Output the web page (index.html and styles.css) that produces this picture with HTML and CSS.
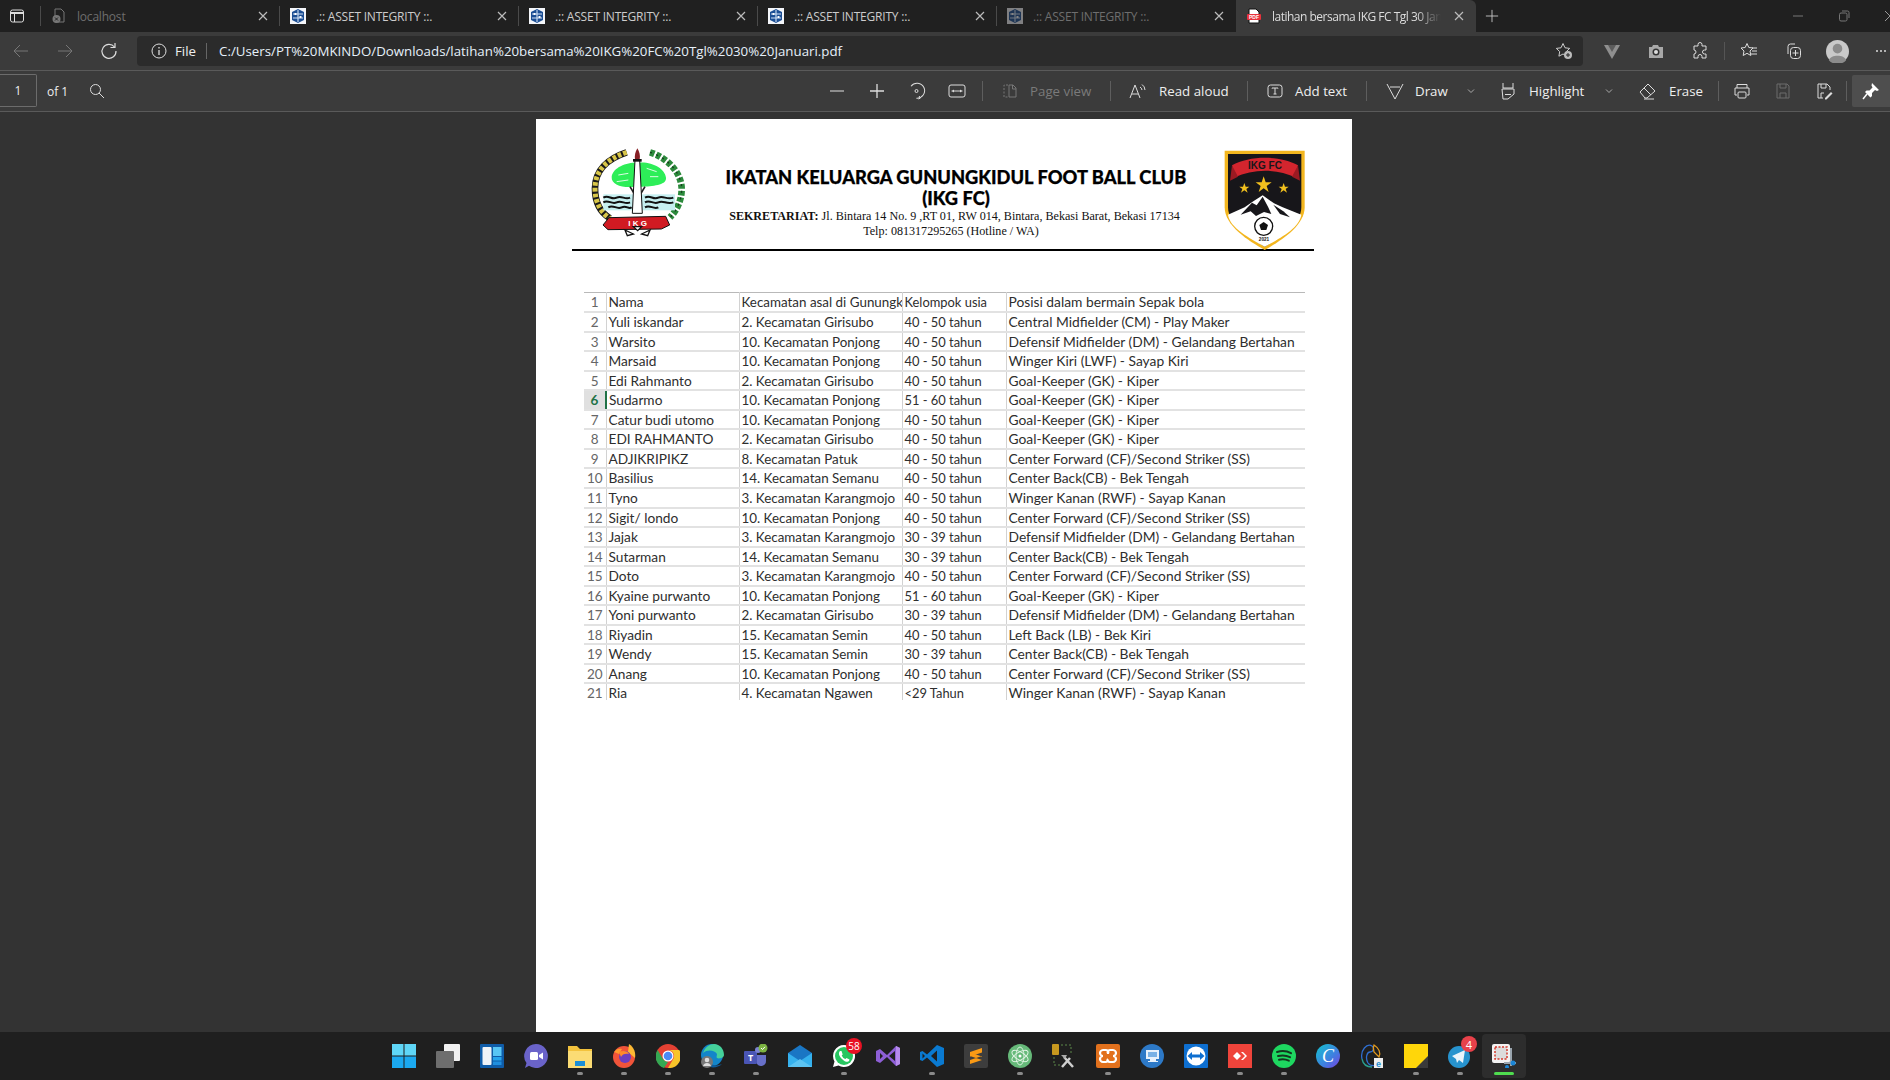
FILE: index.html
```html
<!DOCTYPE html>
<html lang="en">
<head>
<meta charset="utf-8">
<title>latihan bersama IKG FC Tgl 30 Januari</title>
<link rel="stylesheet" href="styles.css">
</head>
<body>
<svg class="defs" aria-hidden="true">
  <symbol id="x" viewBox="0 0 16 16"><path d="M4 4l8 8M12 4l-8 8" fill="none" stroke="currentColor" stroke-width="1.2"/></symbol>
  <symbol id="asset" viewBox="0 0 16 16"><rect width="16" height="16" fill="#f4f6fa"/><path d="M8 1l6 3v8l-6 3-6-3V4z" fill="#1d4f94"/><path d="M8 2v12M3 6h10M3 10h10" stroke="#cfe0f5" stroke-width="1.1"/><path d="M4.500 5h2v2h-2zM9.500 8h2v2h-2z" fill="#fff"/></symbol>
</svg>
<div class="app">
  <div class="tabbar">
    <div class="side-btn"><svg class="ic16" viewBox="0 0 16 16"><rect x="1.500" y="2" width="13" height="12" rx="2" fill="none" stroke="#ddd"/><path d="M1.500 5h13" stroke="#ddd" stroke-width="2"/><path d="M5.500 5v9" stroke="#ddd"/></svg></div>
    <div class="tab tab-dim">
      <svg class="ic16" viewBox="0 0 16 16"><path d="M4 1h6l3 3v10H4z" fill="none" stroke="#777"/><circle cx="5.500" cy="11" r="4" fill="#777"/><path d="M4 9.500l3 3M7 9.500l-3 3" stroke="#222"/></svg>
      <span class="tab-title">localhost</span><svg class="tab-x"><use href="#x"/></svg>
    </div>
    <div class="tab"><svg class="ic16"><use href="#asset"/></svg><span class="tab-title">.:: ASSET INTEGRITY ::.</span><svg class="tab-x"><use href="#x"/></svg></div>
    <div class="tab"><svg class="ic16"><use href="#asset"/></svg><span class="tab-title">.:: ASSET INTEGRITY ::.</span><svg class="tab-x"><use href="#x"/></svg></div>
    <div class="tab"><svg class="ic16"><use href="#asset"/></svg><span class="tab-title">.:: ASSET INTEGRITY ::.</span><svg class="tab-x"><use href="#x"/></svg></div>
    <div class="tab tab-dim tab-last"><svg class="ic16 faded"><use href="#asset"/></svg><span class="tab-title">.:: ASSET INTEGRITY ::.</span><svg class="tab-x"><use href="#x"/></svg></div>
    <div class="tab tab-active">
      <svg class="ic16" viewBox="0 0 16 16"><path d="M3 1h7l3 3v11H3z" fill="#fff" stroke="#111"/><rect x="1" y="6" width="14" height="6" rx="1" fill="#e8323c"/><text x="8" y="11" class="pdf-mark">PDF</text></svg>
      <span class="tab-title fade">latihan bersama IKG FC Tgl 30 Januari</span><svg class="tab-x"><use href="#x"/></svg>
    </div>
    <svg class="new-tab" viewBox="0 0 16 16"><path d="M8 1v14M1 8h14" stroke="#ccc" fill="none"/></svg>
    <div class="win-ctrl">
      <svg class="ic12" viewBox="0 0 12 12"><path d="M1 6h10" stroke="#777"/></svg>
      <svg class="ic12" viewBox="0 0 12 12"><rect x="1.500" y="3" width="7.500" height="8" rx="1.500" fill="none" stroke="#777"/><path d="M4 1h5.500a1.500 1.500 0 0 1 1.500 1.500V8" fill="none" stroke="#777"/></svg>
      <svg class="ic12" viewBox="0 0 12 12"><path d="M1 1l10 10M11 1L1 11" stroke="#999"/></svg>
    </div>
  </div>

  <div class="addr-row">
    <div class="nav-btn"><svg class="ic18" viewBox="0 0 18 18"><path d="M16 9H2M8 3L2 9l6 6" fill="none" stroke="#777"/></svg></div>
    <div class="nav-btn"><svg class="ic18" viewBox="0 0 18 18"><path d="M2 9h14M10 3l6 6-6 6" fill="none" stroke="#777"/></svg></div>
    <div class="nav-btn"><svg class="ic18" viewBox="0 0 18 18"><path d="M14.500 5A7 7 0 1 0 16 9" fill="none" stroke="#ddd" stroke-width="1.200"/><path d="M15 1v4.500h-4.500" fill="none" stroke="#ddd" stroke-width="1.200"/></svg></div>
    <div class="addr-box">
      <svg class="ic16" viewBox="0 0 16 16"><circle cx="8" cy="8" r="7" fill="none" stroke="#ddd"/><path d="M8 7v5M8 4v1.500" stroke="#ddd" stroke-width="1.300"/></svg>
      <span class="addr-file">File</span>
      <span class="addr-sep"></span>
      <span class="addr-url">C:/Users/PT%20MKINDO/Downloads/latihan%20bersama%20IKG%20FC%20Tgl%2030%20Januari.pdf</span>
      <svg class="ic18" viewBox="0 0 18 18"><path d="M8 1.500l2 4.300 4.700.6-3.400 3.200.8 4.600L8 12" fill="none" stroke="#ccc"/><path d="M8 1.500L6 5.800l-4.700.6 3.400 3.200-.8 4.600L8 12" fill="none" stroke="#ccc"/><circle cx="13" cy="13" r="4" fill="#bbb"/><path d="M13 11v4M11 13h4" stroke="#222"/></svg>
    </div>
    <div class="ext-group">
      <div class="ext-btn"><svg class="ic18" viewBox="0 0 18 18"><path d="M1 3h16L9 17z" fill="#8f8f8f"/><path d="M5 3h8L9 10z" fill="#5c5c5c"/></svg></div>
      <div class="ext-btn"><svg class="ic18" viewBox="0 0 18 18"><path d="M2 5h3l1-2h5l1 2h4v11H2z" fill="#a8a8a8"/><circle cx="9" cy="10" r="3.500" fill="#333"/><circle cx="9" cy="10" r="2" fill="#ddd"/></svg></div>
      <div class="ext-btn"><svg class="ic18" viewBox="0 0 18 18"><path d="M7 2.500a2 2 0 0 1 4 0V4h4v4h-1.500a2 2 0 0 0 0 4H15v4h-4v-1.500a2 2 0 0 0-4 0V16H3v-4a2 2 0 0 0 0-4V4h4z" fill="none" stroke="#ddd"/></svg></div>
      <span class="ext-sep"></span>
      <div class="ext-btn"><svg class="ic18" viewBox="0 0 18 18"><path d="M7 1.500l1.800 4 4.200.5-3 3 .8 4.500L7 11.300 3.200 13.500l.8-4.500-3-3 4.200-.5z" fill="none" stroke="#ddd"/><path d="M12 8h5M12 11h5M11 14h6" stroke="#ddd" transform="translate(0 -2)"/></svg></div>
      <div class="ext-btn"><svg class="ic18" viewBox="0 0 18 18"><path d="M4 12V4.500A2.500 2.500 0 0 1 6.500 2H11" fill="none" stroke="#ddd"/><rect x="6.500" y="5.500" width="10" height="11" rx="3" fill="none" stroke="#ddd"/><path d="M11.500 8v6M8.500 11h6" stroke="#ddd"/></svg></div>
      <div class="ext-btn"><svg class="avatar" viewBox="0 0 24 24"><circle cx="12" cy="12" r="12" fill="#c9c9c9"/><circle cx="12" cy="9" r="5" fill="#8b8b8b"/><path d="M3 21c2-6 16-6 18 0a12 12 0 0 1-18 0z" fill="#8b8b8b"/></svg></div>
      <div class="ext-btn dots"><span></span><span></span><span></span></div>
    </div>
  </div>

  <div class="toolbar">
    <div class="pager">
      <div class="page-box">1</div>
      <span class="page-of">of 1</span>
      <svg class="ic16 search" viewBox="0 0 16 16"><circle cx="6.500" cy="6.500" r="5" fill="none" stroke="#ddd"/><path d="M10 10l5 5" stroke="#ddd"/></svg>
    </div>
    <div class="tools">
      <div class="tb"><svg class="ic16" viewBox="0 0 16 16"><path d="M1 8h14" stroke="#bbb" stroke-width="1.300"/></svg></div>
      <div class="tb"><svg class="ic16" viewBox="0 0 16 16"><path d="M1 8h14M8 1v14" stroke="#ddd" stroke-width="1.300"/></svg></div>
      <div class="tb"><svg class="ic18" viewBox="0 0 18 18"><path d="M5 2.500a7.500 7.500 0 1 1 1 13" fill="none" stroke="#ddd" transform="rotate(-20 9 9)"/><circle cx="8.500" cy="9" r="1.500" fill="none" stroke="#ddd"/><path d="M10.500 17l2-1-1.500-2" fill="none" stroke="#ddd"/></svg></div>
      <div class="tb"><svg class="ic18" viewBox="0 0 18 18"><rect x="1" y="3" width="16" height="12" rx="2" fill="none" stroke="#ddd"/><path d="M3.500 9h11" stroke="#ddd"/><path d="M6 7.500L4 9l2 1.500zM12 7.500L14 9l-2 1.500z" fill="#ddd"/></svg></div>
      <span class="tsep sep-a"></span>
      <div class="tl tl-page dim"><svg class="ic16" viewBox="0 0 16 16"><path d="M6 2H2v12h4" fill="none" stroke="#777" stroke-dasharray="2 1.500"/><path d="M7 2h4l3 3v9H7zM10.500 2v4H14" fill="none" stroke="#777"/></svg><span>Page view</span></div>
      <span class="tsep"></span>
      <div class="tl tl-read"><svg class="ic18" viewBox="0 0 18 18"><path d="M1 16L6 3l5 13M3 12h6" fill="none" stroke="#ddd"/><path d="M11 5a4 4 0 0 1 2 3M13 2.500a7 7 0 0 1 3 5.500" fill="none" stroke="#ddd"/></svg><span>Read aloud</span></div>
      <span class="tsep"></span>
      <div class="tl tl-add"><svg class="ic16" viewBox="0 0 16 16"><rect x="1" y="2" width="14" height="12" rx="2.500" fill="none" stroke="#ddd"/><path d="M5 5.500V5h6v.5M8 5v6M6.500 11h3" fill="none" stroke="#ddd"/></svg><span>Add text</span></div>
      <span class="tsep"></span>
      <div class="tl tl-draw"><svg class="ic18" viewBox="0 0 18 18"><path d="M1 2l8 15 8-15M4 5h10" fill="none" stroke="#ddd"/></svg><span>Draw</span><svg class="chev" viewBox="0 0 8 8"><path d="M1 2.500L4 5.500l3-3" fill="none" stroke="#aaa"/></svg></div>
      <div class="tl tl-high"><svg class="ic18" viewBox="0 0 18 18"><path d="M4 1v5h10V1M3 7h12v5l-6 5H4z" fill="none" stroke="#ddd"/><path d="M6 12.500h6" stroke="#ddd"/></svg><span>Highlight</span><svg class="chev" viewBox="0 0 8 8"><path d="M1 2.500L4 5.500l3-3" fill="none" stroke="#aaa"/></svg></div>
      <div class="tl tl-erase"><svg class="ic18" viewBox="0 0 18 18"><path d="M1 10l8-8 7 7-8 7H6z" fill="none" stroke="#ddd"/><path d="M5 6l7 7" stroke="#ddd"/><path d="M5 17h10" stroke="#ddd"/></svg><span>Erase</span></div>
      <span class="tsep"></span>
      <div class="tb tb-print"><svg class="ic18" viewBox="0 0 18 18"><path d="M4 6V2.500h10V6M4 13H2V6h14v7h-2" fill="none" stroke="#ddd"/><rect x="5" y="10" width="8" height="6" rx="1" fill="none" stroke="#ddd"/></svg></div>
      <div class="tb tb-save"><svg class="ic18" viewBox="0 0 18 18"><path d="M3 2h10l2 2v12H3zM6 2v4h6V2M6 16v-5h6v5" fill="none" stroke="#6c6c6c"/></svg></div>
      <div class="tb tb-save"><svg class="ic18" viewBox="0 0 18 18"><path d="M8 16H3V2h9l3 3v3M6 2v4h5V2M6 16v-5h3" fill="none" stroke="#ddd"/><path d="M10 16l6-6 1.500 1.500-6 6H10z" fill="#ddd"/></svg></div>
      <span class="tsep sep-b"></span>
      <div class="pin"><svg class="ic18" viewBox="0 0 18 18"><path d="M10 1l7 7-2 1-2-1-3 3v3l-1.500 1.500L3 10l1.500-1.500h3l3-3-1-2z" fill="#fff"/><path d="M5 12l-4 5" stroke="#fff" stroke-width="1.500"/></svg></div>
    </div>
  </div>

  <main class="viewer">
    <section class="page">
      <header class="letterhead">
        <svg class="logo-left" viewBox="0 0 315 285">
          <path d="M125 22C70 40 30 75 30 130c0 45 20 75 45 90" fill="none" stroke="#1a1a1a" stroke-width="20"/>
          <path d="M125 22C70 40 30 75 30 130c0 45 20 75 45 90" fill="none" stroke="#d8c649" stroke-width="15" stroke-dasharray="11 6"/>
          <path d="M195 22c50 15 95 60 95 110 0 35-15 65-35 85" fill="none" stroke="#2c8a3c" stroke-width="20" stroke-dasharray="14 6"/>
          <path d="M195 22c50 15 95 60 95 110 0 35-15 65-35 85" fill="none" stroke="#173d1d" stroke-width="4" stroke-dasharray="6 14"/>
          <path d="M80 95c5-30 50-45 85-42 40-2 75 20 78 45 2 20-30 25-70 27l-20 0c-40 5-75-5-73-30z" fill="#2dee58"/>
          <path d="M100 90l30-5M185 70l30 10M195 95l25 0M95 110l35-5" stroke="#fff" stroke-width="2.500"/>
          <path d="M135 125l15 25M180 125l-15 25" stroke="#222" stroke-width="5"/>
          <rect x="55" y="148" width="215" height="48" fill="#c5eff0"/>
          <path d="M55 158c15-10 25 8 40 0s25 8 40 0M180 158c15-10 25 8 40 0s25 8 45 0M55 172c15-10 25 8 40 0s25 8 40 0M180 172c15-10 25 8 40 0s25 8 45 0M70 187c15-10 25 8 40 0s20 8 30 0M180 187c15-10 25 8 40 0" fill="none" stroke="#111" stroke-width="6"/>
          <path d="M150 45h14l8 160h-30z" fill="#fff" stroke="#111" stroke-width="3"/>
          <path d="M157 10c7 12 9 20 7 34h-14c-2-14 1-22 7-34z" fill="#861f24"/>
          <rect x="144" y="42" width="26" height="8" fill="#111"/>
          <path d="M72 218l170-4 12 26-25 12-160 2-15-14z" fill="#d01a22" stroke="#111" stroke-width="3"/>
          <text x="158" y="242" class="logo-ikg">I K G</text>
          <path d="M120 255l25 12-18 5zM195 255l-25 12 18 5zM145 245h25l-12 12z" fill="#fff" stroke="#111" stroke-width="4"/>
        </svg>
        <div class="letter-text">
          <h1>IKATAN KELUARGA GUNUNGKIDUL FOOT BALL CLUB<br>(IKG FC)</h1>
          <p class="addr-line"><b>SEKRETARIAT:</b> Jl. Bintara 14 No. 9 ,RT 01, RW 014, Bintara, Bekasi Barat, Bekasi 17134</p>
          <p class="addr-line telp-line">Telp: 081317295265 (Hotline / WA)</p>
        </div>
        <svg class="logo-right" viewBox="0 0 270 312">
          <path d="M14 8h240v170c0 55-70 100-120 128C84 278 14 233 14 178z" fill="#f3b61f"/>
          <path d="M24 18h220v160c0 50-65 90-110 118C89 268 24 228 24 178z" fill="#17161a"/>
          <path d="M24 200l50-22 26-18 28-18 34 24 26 12 56 22c-6 40-65 72-110 96C89 270 30 240 24 200z" fill="#fff"/>
          <path d="M62 200l34-36 14 8 18-26 16 30 10 22-22-6-24 12-16-14z" fill="#17161a"/>
          <path d="M160 170l30 20 20 18-30-10z" fill="#17161a"/>
          <path d="M36 52C90 22 180 22 234 52l-8 36C170 62 100 62 44 88z" fill="#d3252e"/>
          <path d="M36 52l-6 46 24-12zM234 52l6 46-24-12z" fill="#9b1a22"/>
          <text x="135" y="62" class="logo-fc">IKG FC</text>
          <path d="M131 85l6 18h18l-15 11 6 18-15-11-15 11 6-18-15-11h18z" fill="#f2c01e"/>
          <path d="M73 105l4 11h11l-9 7 4 11-10-7-10 7 4-11-9-7h11z" fill="#f2c01e"/>
          <path d="M191 105l4 11h11l-9 7 4 11-10-7-10 7 4-11-9-7h11z" fill="#f2c01e"/>
          <circle cx="131" cy="235" r="27" fill="#fff" stroke="#111" stroke-width="4"/>
          <path d="M131 222l13 9-5 15h-16l-5-15z" fill="#111"/>
          <text x="132" y="279" class="logo-year">2021</text>
        </svg>
      </header>
      <div class="rule"></div>
      <div class="sheet">
        <table>
          <colgroup><col class="c0"><col class="c1"><col class="c2"><col class="c3"><col class="c4"></colgroup>
          <tbody>
          <tr><th>1</th><td>Nama</td><td>Kecamatan asal di Gunungkidul</td><td>Kelompok usia</td><td>Posisi dalam bermain Sepak bola</td></tr>
          <tr><th>2</th><td>Yuli iskandar</td><td>2. Kecamatan Girisubo</td><td>40 - 50 tahun</td><td>Central Midfielder (CM) - Play Maker</td></tr>
          <tr><th>3</th><td>Warsito</td><td>10. Kecamatan Ponjong</td><td>40 - 50 tahun</td><td>Defensif Midfielder (DM) - Gelandang Bertahan</td></tr>
          <tr><th>4</th><td>Marsaid</td><td>10. Kecamatan Ponjong</td><td>40 - 50 tahun</td><td>Winger Kiri (LWF) - Sayap Kiri</td></tr>
          <tr><th>5</th><td>Edi Rahmanto</td><td>2. Kecamatan Girisubo</td><td>40 - 50 tahun</td><td>Goal-Keeper (GK) - Kiper</td></tr>
          <tr><th class="sel">6</th><td>Sudarmo</td><td>10. Kecamatan Ponjong</td><td>51 - 60 tahun</td><td>Goal-Keeper (GK) - Kiper</td></tr>
          <tr><th>7</th><td>Catur budi utomo</td><td>10. Kecamatan Ponjong</td><td>40 - 50 tahun</td><td>Goal-Keeper (GK) - Kiper</td></tr>
          <tr><th>8</th><td>EDI RAHMANTO</td><td>2. Kecamatan Girisubo</td><td>40 - 50 tahun</td><td>Goal-Keeper (GK) - Kiper</td></tr>
          <tr><th>9</th><td>ADJIKRIPIKZ</td><td>8. Kecamatan Patuk</td><td>40 - 50 tahun</td><td>Center Forward (CF)/Second Striker (SS)</td></tr>
          <tr><th>10</th><td>Basilius</td><td>14. Kecamatan Semanu</td><td>40 - 50 tahun</td><td>Center Back(CB) - Bek Tengah</td></tr>
          <tr><th>11</th><td>Tyno</td><td>3. Kecamatan Karangmojo</td><td>40 - 50 tahun</td><td>Winger Kanan (RWF) - Sayap Kanan</td></tr>
          <tr><th>12</th><td>Sigit/ londo</td><td>10. Kecamatan Ponjong</td><td>40 - 50 tahun</td><td>Center Forward (CF)/Second Striker (SS)</td></tr>
          <tr><th>13</th><td>Jajak</td><td>3. Kecamatan Karangmojo</td><td>30 - 39 tahun</td><td>Defensif Midfielder (DM) - Gelandang Bertahan</td></tr>
          <tr><th>14</th><td>Sutarman</td><td>14. Kecamatan Semanu</td><td>30 - 39 tahun</td><td>Center Back(CB) - Bek Tengah</td></tr>
          <tr><th>15</th><td>Doto</td><td>3. Kecamatan Karangmojo</td><td>40 - 50 tahun</td><td>Center Forward (CF)/Second Striker (SS)</td></tr>
          <tr><th>16</th><td>Kyaine purwanto</td><td>10. Kecamatan Ponjong</td><td>51 - 60 tahun</td><td>Goal-Keeper (GK) - Kiper</td></tr>
          <tr><th>17</th><td>Yoni purwanto</td><td>2. Kecamatan Girisubo</td><td>30 - 39 tahun</td><td>Defensif Midfielder (DM) - Gelandang Bertahan</td></tr>
          <tr><th>18</th><td>Riyadin</td><td>15. Kecamatan Semin</td><td>40 - 50 tahun</td><td>Left Back (LB) - Bek Kiri</td></tr>
          <tr><th>19</th><td>Wendy</td><td>15. Kecamatan Semin</td><td>30 - 39 tahun</td><td>Center Back(CB) - Bek Tengah</td></tr>
          <tr><th>20</th><td>Anang</td><td>10. Kecamatan Ponjong</td><td>40 - 50 tahun</td><td>Center Forward (CF)/Second Striker (SS)</td></tr>
          <tr><th>21</th><td>Ria</td><td>4. Kecamatan Ngawen</td><td>&lt;29 Tahun</td><td>Winger Kanan (RWF) - Sayap Kanan</td></tr>
          </tbody>
        </table>
      </div>
    </section>
  </main>

  <footer class="taskbar">
    <div class="task"><svg viewBox="0 0 24 24"><path d="M0 0h11.500v11.500H0zM12.500 0H24v11.500H12.500z" fill="#5fd6f7"/><path d="M0 12.500h11.500V24H0zM12.500 12.500H24V24H12.500z" fill="#1ba9f0"/></svg></div>
    <div class="task"><svg viewBox="0 0 24 24"><rect x="8" y="0" width="16" height="17" rx="1" fill="#f1f1f1"/><rect x="0" y="7" width="18" height="17" rx="1" fill="#6e6e6e"/></svg></div>
    <div class="task"><svg viewBox="0 0 24 24"><rect width="24" height="24" rx="1" fill="#0f5ca8"/><rect x="2.500" y="3" width="9" height="18" rx="1" fill="#eef3f8"/><rect x="13" y="3" width="8.500" height="9" fill="#58c6f5"/><rect x="13" y="13" width="8.500" height="3.500" fill="#26a5ee"/><rect x="13" y="17.500" width="8.500" height="3.500" fill="#1f8fe0"/></svg></div>
    <div class="task"><svg viewBox="0 0 24 24"><path d="M12 0a12 12 0 1 1-7 21.800L1 24l1.500-5A12 12 0 0 1 12 0z" fill="#6a63c9"/><rect x="6" y="8" width="8" height="8" rx="1.500" fill="#fff"/><path d="M15 11l4-2.500v7L15 13z" fill="#fff"/></svg></div>
    <div class="task on"><svg viewBox="0 0 24 24"><path d="M0 2h9l3 3h12v19H0z" fill="#f3c33d"/><path d="M0 7h24v17H0z" fill="#fbdc74"/><rect x="7" y="17" width="10" height="5" fill="#1c8fd6"/></svg></div>
    <div class="task on"><svg viewBox="0 0 24 24"><circle cx="12" cy="13" r="11" fill="#f0543a"/><path d="M17 0c5 3 7 9 6 14L16 8z" fill="#fdb933"/><path d="M2 8c2-3 5-4 8-3l-3 5z" fill="#ff9a2e"/><circle cx="13" cy="13" r="6" fill="#6c3ec0"/><path d="M7 8c4-2 9-1 10 2-3-1-7 0-8 3z" fill="#ff8a2a"/></svg></div>
    <div class="task on"><svg viewBox="0 0 24 24"><circle cx="12" cy="12" r="12" fill="#e44133"/><path d="M12 6h11.300A12 12 0 0 1 12 24l5.500-9.500A6 6 0 0 0 12 6z" fill="#f8c42a"/><path d="M1.600 6L7 15a6 6 0 0 0 5 3L8 24A12 12 0 0 1 1.600 6z" fill="#35a853"/><circle cx="12" cy="12" r="5.500" fill="#fff"/><circle cx="12" cy="12" r="4.300" fill="#4b8bf5"/></svg></div>
    <div class="task on"><svg viewBox="0 0 24 24"><circle cx="12" cy="11" r="11" fill="#1385c9"/><path d="M3 9C5 3 10 0 14 0c6 0 10 5 10 11 0 3-5 4-7 3-1-1 0-2 0-4-2-4-10-5-14-1z" fill="#45d19b"/><path d="M7 16c3 5 9 7 15 4-3 3-8 4-12 3-4-1-5-4-3-7z" fill="#0f5c9a"/><circle cx="7" cy="18" r="6" fill="#777"/><circle cx="7" cy="16" r="2.300" fill="#ddd"/><path d="M3 22c1-4 7-4 8 0z" fill="#ddd"/></svg></div>
    <div class="task on"><svg viewBox="0 0 24 24"><rect x="0" y="7" width="13" height="13" rx="1" fill="#4a55b5"/><text x="6.500" y="17" class="t-mark">T</text><circle cx="14" cy="6" r="3" fill="#7b83d3"/><path d="M13 11h9v6a5 5 0 0 1-9 3z" fill="#6870c9"/><circle cx="19" cy="4" r="4.500" fill="#7cb342"/><path d="M17 4l1.500 1.500L21 2.800" fill="none" stroke="#fff"/></svg></div>
    <div class="task"><svg viewBox="0 0 24 24"><path d="M12 1L24 9v14H0V9z" fill="#1a76c4"/><path d="M0 9l12 8 12-8v14H0z" fill="#35b1ee"/><path d="M0 23l12-8 12 8z" fill="#5cc4f3"/></svg></div>
    <div class="task on"><svg viewBox="0 0 24 24"><path d="M12 1a11 11 0 1 1-5.500 20.500L1 23l1.500-5.500A11 11 0 0 1 12 1z" fill="#fff"/><circle cx="12" cy="12" r="9" fill="#27c660"/><path d="M8 7c-2 2-1 5 2 8s6 3.500 7 2l.5-1.500-3-1.500-1 1c-2-.5-3-2-3.800-3.500l1-1L9.500 7z" fill="#fff"/></svg><span class="badge badge-58">58</span></div>
    <div class="task"><svg viewBox="0 0 24 24"><path d="M0 7l4-2 7 6 9-9 4 2v16l-4 2-9-9-7 6-4-2z" fill="#8e5fd6"/><path d="M4 9v6l3-3zM19 7l-6 5 6 5z" fill="#1f1f1f"/><path d="M20 2l4 2v16l-4 2z" fill="#b58aec"/></svg></div>
    <div class="task on"><svg viewBox="0 0 24 24"><path d="M17 1l7 3v16l-7 3L7 13.500 2.500 17 0 16V8l2.500-1L7 10.500z" fill="#0a7ad1"/><path d="M17 6.500L11 12l6 5.500z" fill="#1f1f1f"/><path d="M2.500 9.500L5 12l-2.500 2.500z" fill="#1f1f1f"/></svg></div>
    <div class="task"><svg viewBox="0 0 24 24"><rect width="24" height="24" rx="2" fill="#3d3d3d"/><path d="M6 8L18 4v4.500L6 12.500zM6 8.500L18 12.500V16L6 12zM18 12L6 16v4L18 16z" fill="#fa9a14"/></svg></div>
    <div class="task on"><svg viewBox="0 0 24 24"><circle cx="12" cy="12" r="12" fill="#66b979"/><g fill="none" stroke="#e8f6ea" stroke-width=".9"><ellipse cx="12" cy="12" rx="9" ry="4" transform="rotate(30 12 12)"/><ellipse cx="12" cy="12" rx="9" ry="4" transform="rotate(-30 12 12)"/><ellipse cx="12" cy="12" rx="9" ry="4" transform="rotate(90 12 12)"/></g><circle cx="12" cy="12" r="1.500" fill="#fff"/></svg></div>
    <div class="task"><svg viewBox="0 0 24 24"><rect x="0" y="0" width="7" height="11" rx="1" fill="#c7981f"/><path d="M9 1h10v9M2 13v8h6" fill="none" stroke="#5d8a4a" stroke-dasharray="2 2"/><path d="M10 23l8-9M12 13l9 10" stroke="#cfcfcf" stroke-width="2.500"/><path d="M9 11h6l-2 4z" fill="#aaa"/></svg></div>
    <div class="task on"><svg viewBox="0 0 24 24"><rect width="24" height="24" rx="2" fill="#e2711d"/><path d="M7 6h3c2 0 3 2 2 3l0 1 0-1c-1-1 0-3 2-3h3c2 0 3 2 3 3s-1 3-3 3c2 0 3 2 3 3s-1 3-3 3h-3c-2 0-3-2-2-3-1 1 0 3-2 3H7c-2 0-3-2-3-3s1-3 3-3c-2 0-3-2-3-3s1-3 3-3z" fill="none" stroke="#fff" stroke-width="2.200"/></svg></div>
    <div class="task"><svg viewBox="0 0 24 24"><circle cx="12" cy="12" r="12" fill="#2d79c7"/><path d="M6 6h13v9H6z" fill="#e8f1fb"/><path d="M8 8h9v5H8z" fill="#7ab1e5"/><path d="M10 15h6v2h2v1H8v-1h2z" fill="#e8f1fb"/></svg></div>
    <div class="task"><svg viewBox="0 0 24 24"><rect width="24" height="24" rx="1" fill="#0e6fd0"/><circle cx="12" cy="12" r="9.500" fill="#fff"/><path d="M3.500 12L8 8v2.500h8V8l4.500 4L16 16v-2.500H8V16z" fill="#0e6fd0"/></svg></div>
    <div class="task on"><svg viewBox="0 0 24 24"><rect width="24" height="24" fill="#ef443b"/><path d="M9 8l4 4-4 4-4-4z" fill="#fff"/><path d="M13 8l4 4-4 4 2 0 4-4-4-4z" fill="#fff"/></svg></div>
    <div class="task on"><svg viewBox="0 0 24 24"><circle cx="12" cy="12" r="12" fill="#1ed760"/><path d="M5 8c5-1.500 10-1 14 1.200M6 12c4-1 8.500-.7 12 1.200M7 15.700c3.500-.8 6.800-.5 9.800 1" fill="none" stroke="#14361f" stroke-width="2" stroke-linecap="round"/></svg></div>
    <div class="task"><svg viewBox="0 0 24 24"><defs><linearGradient id="cv" x1="0" y1="0" x2="1" y2="1"><stop offset="0" stop-color="#13c4cf"/><stop offset=".6" stop-color="#3f7ee0"/><stop offset="1" stop-color="#7b3fe0"/></linearGradient></defs><circle cx="12" cy="12" r="12" fill="url(#cv)"/><text x="12" y="18" class="c-mark">C</text></svg></div>
    <div class="task"><svg viewBox="0 0 24 24"><path d="M2 15C0 6 7-1 12 2c3 2 1 6-2 6S5 14 8 19c2 3 6 3 9 2" fill="none" stroke="#2f6fd2" stroke-width="1.300"/><path d="M14 1c5 3 7 8 5 12l-5-5c-1-3-1-5 0-7z" fill="none" stroke="#e39a1e" stroke-width="1.300"/><path d="M2 15c1 5 5 8 10 8" fill="none" stroke="#2a9d8f" stroke-width="1.300"/><rect x="14" y="14" width="9" height="10" fill="#eee"/><text x="18.500" y="22.500" class="e-mark">e</text></svg></div>
    <div class="task on"><svg viewBox="0 0 24 24"><rect width="24" height="24" fill="#ffd60a"/><path d="M12 24L24 12v12z" fill="#3a3a3a"/></svg></div>
    <div class="task on"><svg viewBox="0 0 24 24"><circle cx="11" cy="13" r="11" fill="#2793ce"/><path d="M4 12l13-6-2 13-4-3-2 3-1-4z" fill="#e9f4fb"/></svg><span class="badge badge-4">4</span></div>
    <div class="task active"><svg viewBox="0 0 24 24"><rect x="0" y="0" width="18" height="19" rx="2" fill="#f2f2f2"/><rect x="3" y="3" width="12" height="12" fill="#dcdcdc" stroke="#d43a2c" stroke-dasharray="2 1.500" stroke-width="1.500"/><path d="M19 4v18M12 19h12" stroke="#9aa5ae" stroke-width="2"/><circle cx="21" cy="19" r="2.500" fill="#1b86d6"/><circle cx="15" cy="23" r="2" fill="#1b86d6"/></svg></div>
  </footer>
</div>
</body>
</html>
```
FILE: styles.css
```css
* { box-sizing: border-box; }
html, body { margin: 0; height: 100%; background: #333; }
body { font-family: "Open Sans", "Liberation Sans", sans-serif; overflow: hidden; }
.defs { display: none; }
.app { width: 1890px; height: 1080px; display: flex; flex-direction: column; overflow: hidden; }

.ic12 { width: 12px; height: 12px; flex: none; }
.ic16 { width: 16px; height: 16px; flex: none; }
.ic18 { width: 18px; height: 18px; flex: none; }
.faded { opacity: .45; }

/* tab strip */
.tabbar { height: 32px; background: #202020; display: flex; align-items: stretch; color: #ccc; font-size: 12px; flex: none; }
.side-btn { width: 41px; flex: none; display: flex; align-items: center; padding-left: 9px; border-right: 1px solid #4a4a4a; margin: 6px 0; }
.tab { width: 239px; flex: none; display: flex; align-items: center; padding: 0 9px 0 10px; gap: 10px; position: relative; }
.tab::after { content: ""; position: absolute; right: 0; top: 6px; bottom: 6px; width: 1px; background: #4a4a4a; }
.tab-last::after, .tab-active::after { display: none; }
.tab-title { flex: 1; white-space: nowrap; overflow: hidden; letter-spacing: -.2px; }
.tab-x { width: 16px; height: 16px; flex: none; color: #bbb; }
.tab-dim .tab-title { color: #6e6e6e; }
.tab-active { width: 240px; background: #3b3b3b; border-radius: 0 6px 0 0; }
.fade { color: #ddd; letter-spacing: -.5px; -webkit-mask-image: linear-gradient(90deg, #000 85%, transparent); mask-image: linear-gradient(90deg, #000 85%, transparent); }
.pdf-mark { font: bold 5px "Liberation Sans", sans-serif; fill: #fff; text-anchor: middle; }
.new-tab { width: 14px; height: 14px; align-self: center; margin-left: 9px; flex: none; }
.win-ctrl { margin-left: 293px; display: flex; align-items: center; gap: 34px; flex: none; }

/* address row */
.addr-row { height: 39px; background: #3b3b3b; border-bottom: 1px solid #5a5a5a; display: flex; align-items: center; flex: none; }
.nav-btn { width: 44px; display: flex; justify-content: center; flex: none; }
.nav-btn:first-child { margin-left: -1px; }
.addr-box { width: 1446px; height: 30px; margin-left: 6px; background: #2b2b2b; border-radius: 4px; display: flex; align-items: center; padding: 0 10px 0 14px; color: #eee; font-size: 13.300px; flex: none; }
.addr-file { margin-left: 8px; }
.addr-sep { width: 1px; height: 16px; background: #666; margin: 0 12px 0 10px; }
.addr-url { flex: 1; color: #e6f0fa; white-space: nowrap; }
.ext-group { display: flex; align-items: center; margin-left: 7px; flex: none; }
.ext-btn { width: 44px; display: flex; justify-content: center; align-items: center; flex: none; }
.ext-sep { width: 1px; height: 18px; background: #555; margin: 0 2px; }
.avatar { width: 23px; height: 23px; }
.dots { gap: 2px; }
.dots span { width: 2px; height: 2px; background: #ddd; border-radius: 50%; }

/* pdf toolbar */
.toolbar { height: 41px; background: #3b3b3b; border-bottom: 1px solid #5a5a5a; display: flex; align-items: center; color: #eee; font-size: 13.300px; flex: none; }
.pager { width: 817px; display: flex; align-items: center; flex: none; }
.page-box { width: 37px; height: 33px; border: 1px solid #6c6c6c; border-left: 0; border-radius: 0 2px 2px 0; display: flex; align-items: center; justify-content: center; margin-top: -1px; font-size: 12px; }
.page-of { margin-left: 10px; font-size: 12px; }
.search { margin-left: 21px; }
.tools { display: flex; align-items: center; height: 100%; flex: none; }
.tb { width: 40px; display: flex; justify-content: center; flex: none; }
.tsep { width: 1px; height: 20px; background: #5e5e5e; flex: none; }
.sep-a { margin-left: 5px; }
.tl { display: flex; align-items: center; flex: none; white-space: nowrap; }
.tl span { margin-left: 12px; }
.dim { color: #7a7a7a; }
.tl-page { width: 127px; padding-left: 19px; }
.tl-read { width: 136px; padding-left: 18px; }
.tl-add { width: 118px; padding-left: 19px; }
.tl-draw { width: 132px; padding-left: 19px; }
.tl-draw span { margin-left: 11px; }
.tl-draw .chev { margin-left: 19px; }
.tl-high { width: 140px; }
.tl-high .chev { margin-left: 21px; }
.tl-erase { width: 79px; }
.chev { width: 8px; height: 8px; flex: none; }
.tb-print { margin-left: 3px; }
.tb-save { margin-left: 1px; }
.sep-b { margin-left: 2px; }
.pin { width: 38px; height: 32px; margin-left: 5px; background: #4e4e4e; border-radius: 2px 0 0 2px; display: flex; align-items: center; justify-content: center; flex: none; }

/* document */
.viewer { flex: 1; min-height: 0; background: #333; padding: 7px 0 0 536px; overflow: hidden; }
.page { width: 816px; height: 100%; background: #fff; overflow: hidden; }
.letterhead { height: 129px; display: flex; align-items: flex-start; }
.logo-left { width: 105px; height: 95px; margin: 26px 0 0 49px; flex: none; }
.letter-text { width: 530px; margin-left: 1px; padding-top: 48px; text-align: center; color: #000; flex: none; }
.letter-text h1 { margin: 0; font: 900 18.300px/21px Lato, "Liberation Sans", sans-serif; -webkit-text-stroke: .25px #000; white-space: nowrap; }
.addr-line { margin: 0; padding-right: 3px; font: 12.100px/14.500px "Liberation Serif", serif; color: #111; white-space: nowrap; }
.telp-line { padding-right: 10px; }
.logo-right { width: 90px; height: 104px; margin: 29px 0 0 -1px; flex: none; }
.rule { height: 2px; background: #000; margin: 1px 38px 0 36px; }
.sheet { margin: 41px 0 0 48px; width: 721px; height: 408px; overflow: hidden; color: #2e2e2e; }
.sheet table { border-collapse: collapse; table-layout: fixed; width: 721px; font: 13.500px/15px Lato, "Open Sans", sans-serif; border-top: 1px solid #b9b9b9; }
.c0 { width: 22px; } .c1 { width: 133px; } .c2 { width: 163px; } .c3 { width: 104px; } .c4 { width: 299px; }
.sheet tr { height: 19.560px; }
.sheet th, .sheet td { padding: 1px 0 0 2px; white-space: nowrap; overflow: hidden; vertical-align: baseline; border-bottom: 2px solid #e2e2e2; }
.sheet td { border-left: 1px solid #d2d2d2; }
.sheet td:nth-child(2) { font-size: 13.700px; }
.sheet td:nth-child(3) { font-size: 13.400px; }
.sheet td:nth-child(4) { font-size: 12.900px; }
.sheet td:nth-child(5) { font-size: 13.800px; }
.sheet th { font-weight: 400; color: #666; text-align: center; padding: 1px 0 0; }
.sheet th.sel { font-weight: 700; color: #217346; background: #e0e0e0; }
.sheet tr:nth-child(6) td:nth-child(2) { border-left: 2px solid #217346; }
.logo-ikg { font: 900 24px "Liberation Sans", sans-serif; fill: #fff; text-anchor: middle; }
.logo-fc { font: 900 30px "Liberation Sans", sans-serif; fill: #17161a; text-anchor: middle; }
.logo-year { font: 700 14px "Liberation Sans", sans-serif; fill: #111; text-anchor: middle; }

/* taskbar */
.taskbar { height: 48px; background: #1f1f1f; display: flex; padding-left: 382px; flex: none; }
.task { width: 44px; position: relative; display: flex; align-items: center; justify-content: center; flex: none; }
.task svg { width: 24px; height: 24px; }
.task.on::after, .task.active::after { content: ""; position: absolute; bottom: 5px; left: 19px; width: 6px; height: 3px; border-radius: 2px; background: #8a8a8a; }
.task.active { background: #2d2d2d; border-radius: 4px; margin: 2px 0; }
.task.active::after { left: 12px; width: 20px; bottom: 3px; background: #4fdc4f; }
.badge { position: absolute; background: #e81123; color: #fff; border-radius: 50%; display: flex; align-items: center; justify-content: center; font-size: 11px; line-height: 1; }
.badge-58 { width: 16px; height: 16px; top: 6px; right: 4px; font-size: 10px; }
.badge-4 { width: 16px; height: 16px; top: 4px; right: 5px; background: #e8414a; }
.t-mark { font: bold 9px "Open Sans", sans-serif; fill: #fff; text-anchor: middle; }
.c-mark { font: italic 18px "Liberation Serif", serif; fill: #fff; text-anchor: middle; }
.e-mark { font: bold 9px "Liberation Sans", sans-serif; fill: #1f8fd0; text-anchor: middle; }
```
